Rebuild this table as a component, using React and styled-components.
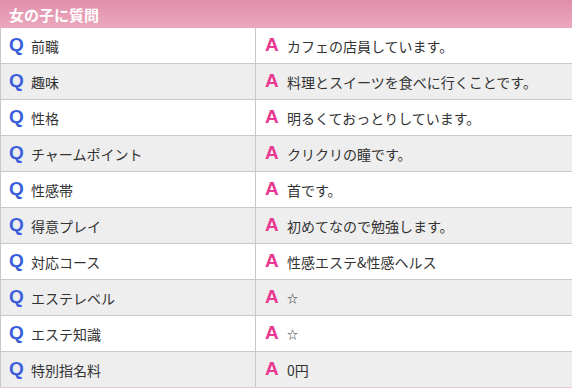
import React from "react";
import styled, { createGlobalStyle } from "styled-components";

const Global = createGlobalStyle`
  html, body { margin: 0; padding: 0; background: #fff; }
  body { font-family: "Noto Sans CJK JP", "Noto Sans", sans-serif; }
`;

const Panel = styled.section`
  width: 572px;
  border-bottom: 1px solid #f0c4d2;
`;

const Header = styled.h2`
  margin: 0;
  height: 28px;
  padding: 0 9px;
  display: flex;
  align-items: center;
  background: linear-gradient(to bottom, #e18fab, #eaa8bd);
  color: #fff;
  font-size: 15px;
  font-weight: 700;
  line-height: 1;
`;

const Row = styled.div`
  display: grid;
  grid-template-columns: 255px 1fr;
  height: 35px;
  border-bottom: 1px solid #c9c9c9;
  border-left: 1px solid #c9c9c9;
  background: ${(p) => (p.$shade ? "#eeeeee" : "#ffffff")};
  &:last-child { border-bottom: none; }
`;

const Cell = styled.div`
  display: flex;
  align-items: center;
  padding-left: ${(p) => (p.$answer ? "9px" : "8px")};
  border-right: ${(p) => (p.$answer ? "none" : "1px solid #c9c9c9")};
  font-size: 14px;
  color: #333;
  white-space: nowrap;
`;

const Mark = styled.span`
  font-family: "Liberation Sans", Arial, sans-serif;
  font-weight: 700;
  font-size: 19px;
  color: ${(p) => p.$color};
  width: 22px;
  flex: none;
  line-height: 1;
  position: relative;
  top: -1px;
`;

const Text = styled.span`
  font-size: ${(p) => (p.$small ? "11px" : "14px")};
`;

const rows = [
  ["前職", "カフェの店員しています。"],
  ["趣味", "料理とスイーツを食べに行くことです。"],
  ["性格", "明るくておっとりしています。"],
  ["チャームポイント", "クリクリの瞳です。"],
  ["性感帯", "首です。"],
  ["得意プレイ", "初めてなので勉強します。"],
  ["対応コース", "性感エステ&性感ヘルス"],
  ["エステレベル", "☆"],
  ["エステ知識", "☆"],
  ["特別指名料", "0円"],
];

export default function App() {
  return (
    <>
      <Global />
      <Panel>
        <Header>女の子に質問</Header>
        {rows.map(([q, a], i) => (
          <Row key={q} $shade={i % 2 === 1}>
            <Cell>
              <Mark $color="#3b5fdb">Q</Mark>
              <Text>{q}</Text>
            </Cell>
            <Cell $answer>
              <Mark $color="#e8378f">A</Mark>
              <Text $small={a === "☆"}>{a}</Text>
            </Cell>
          </Row>
        ))}
      </Panel>
    </>
  );
}
